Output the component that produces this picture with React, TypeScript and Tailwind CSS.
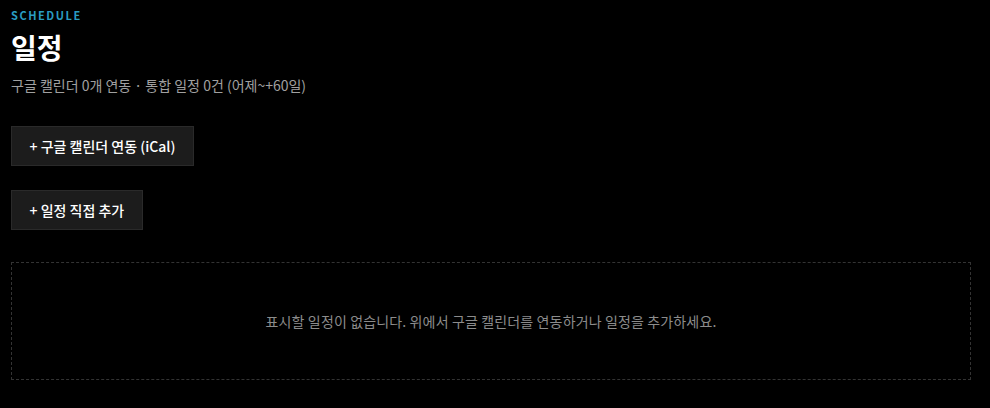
import React from "react";

export default function App() {
  return (
    <div
      className="min-h-screen bg-[#000000] pl-[11px] pr-[20px] pt-[7px]"
      style={{ fontFamily: '"Noto Sans CJK KR", "Noto Sans", sans-serif' }}
    >
      <div className="text-[11px] font-bold tracking-[0.14em] leading-[16px] text-[#2a9cc2]">SCHEDULE</div>
      <h1 className="mt-[5px] text-[28px] font-bold leading-[38px] text-white">일정</h1>
      <p className="mt-[9px] text-[14px] leading-[20px] text-[#a0a0a0]">
        구글 캘린더 0개 연동 · 통합 일정 0건 (어제~+60일)
      </p>
      <div className="mt-[31px] flex flex-col items-start gap-[24px]">
        <button className="h-[40px] border border-[#2a2a2a] bg-[#1c1c1c] px-[17.5px] text-[14px] font-medium text-white">
          + 구글 캘린더 연동 (iCal)
        </button>
        <button className="h-[40px] border border-[#2a2a2a] bg-[#1c1c1c] px-[17.5px] text-[14px] font-medium text-white">
          + 일정 직접 추가
        </button>
      </div>
      <div className="mt-[32px] flex h-[118px] w-[960px] items-center justify-center border border-dashed border-[#333333] text-[14px] tracking-[0.01em] text-[#8c8c8c]">
        표시할 일정이 없습니다. 위에서 구글 캘린더를 연동하거나 일정을 추가하세요.
      </div>
    </div>
  );
}
